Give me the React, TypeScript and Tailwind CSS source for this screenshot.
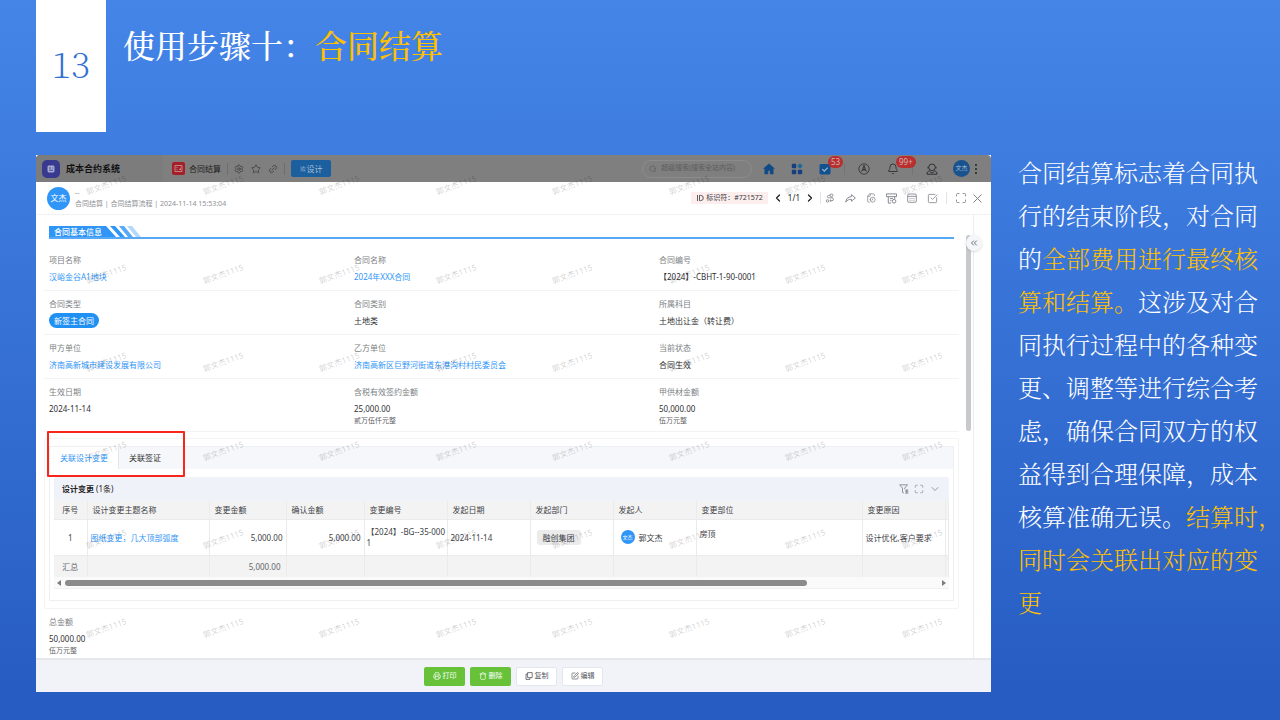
import React, { useState } from "react";
import clsx from "clsx";
import {
  Bell,
  ChevronDown,
  ChevronLeft,
  ChevronRight,
  ChevronsLeft,
  FileClock,
  Link2,
  Maximize,
  Printer,
  Search,
  Settings,
  SlidersHorizontal,
  SquareCheckBig,
  SquarePen,
  Star,
  Trash,
  X,
} from "lucide-react";

type Field = {
  label: string;
  value: string;
  kind?: "text" | "link" | "tag";
  note?: string;
};

const rows: Field[][] = [
  [
    { label: "项目名称", value: "汉峪金谷A1地块", kind: "link" },
    { label: "合同名称", value: "2024年XXX合同", kind: "link" },
    { label: "合同编号", value: "【2024】-CBHT-1-90-0001" },
  ],
  [
    { label: "合同类型", value: "新签主合同", kind: "tag" },
    { label: "合同类别", value: "土地类" },
    { label: "所属科目", value: "土地出让金（转让费）" },
  ],
  [
    { label: "甲方单位", value: "济南高新城市建设发展有限公司", kind: "link" },
    {
      label: "乙方单位",
      value: "济南高新区巨野河街道东港沟村村民委员会",
      kind: "link",
    },
    { label: "当前状态", value: "合同生效" },
  ],
  [
    { label: "生效日期", value: "2024-11-14" },
    { label: "含税有效签约金额", value: "25,000.00", note: "贰万伍仟元整" },
    { label: "甲供材金额", value: "50,000.00", note: "伍万元整" },
  ],
];

const columns = [
  { title: "序号", width: "w-[33px]" },
  { title: "设计变更主题名称", width: "w-[122px]" },
  { title: "变更金额", width: "w-[77px]" },
  { title: "确认金额", width: "w-[78px]" },
  { title: "变更编号", width: "w-[83px]" },
  { title: "发起日期", width: "w-[83px]" },
  { title: "发起部门", width: "w-[83px]" },
  { title: "发起人", width: "w-[83px]" },
  { title: "变更部位", width: "w-[166px]" },
  { title: "变更原因", width: "w-[83px]" },
];

const FieldItem: React.FC<{ field: Field }> = ({ field }) => (
  <div className="pl-[5px] pt-[5px]">
    <div className="text-[8px] leading-4 text-[#7d7f84]">{field.label}</div>
    {field.kind === "link" && (
      <a
        href="#"
        className="mt-[2px] block text-[8px] leading-[14px] text-[#2f95f7]"
      >
        {field.value}
      </a>
    )}
    {field.kind === "tag" && (
      <div className="mt-px w-fit rounded-full bg-[#2090f3] px-[5px] text-[8px] leading-[15px] text-white">
        {field.value}
      </div>
    )}
    {!field.kind && (
      <div className="mt-[2px] text-[8px] leading-[14px] text-[#303133]">
        {field.value}
      </div>
    )}
    {field.note && (
      <div className="text-[7px] leading-[9px] text-[#606266]">
        {field.note}
      </div>
    )}
  </div>
);

const Badge: React.FC<{ children: React.ReactNode }> = ({ children }) => (
  <span className="absolute -top-[7px] left-[9px] rounded-full bg-[#b92e2e] px-[3px] text-[8px] leading-[12px] text-[#d0b4b4]">
    {children}
  </span>
);

const TopBar: React.FC = () => (
  <header className="flex h-[27px] items-center rounded-t-[4px] bg-[#7f7f7f] pr-3 text-[#3b3d41]">
    <div className="flex h-full w-[127px] items-center gap-[6px] rounded-tl-[4px] bg-[#7c7c7d] pl-[6px]">
      <svg viewBox="0 0 18 18" className="size-[18px]">
        <rect width="18" height="18" rx="5" fill="#373a8e" />
        <rect x="5.5" y="5.5" width="7" height="7" rx="1.4" fill="#a7aad0" />
        <path
          d="M7 8h2M7 10.2h4M10.5 8h.8"
          stroke="#373a8e"
          strokeWidth=".9"
        />
      </svg>
      <span className="text-[9px] font-bold text-[#111]">成本合约系统</span>
    </div>
    <div className="ml-[9px] flex items-center gap-1">
      <svg viewBox="0 0 13 13" className="size-[13px]">
        <rect width="13" height="13" rx="2" fill="#a61f28" />
        <path
          d="M3 3.5h7v6H3zM4.5 5.5h1M4.5 7.5h1M7 7l1.2 1L9 5.5"
          fill="none"
          stroke="#c5a0a2"
          strokeWidth=".8"
        />
      </svg>
      <span className="text-[8px] text-[#1d1e20]">合同结算</span>
    </div>
    <span className="mx-[6px] h-3 w-px bg-[#6d6d6d]" />
    <div className="flex items-center gap-[7px]">
      <button aria-label="设置">
        <Settings size={10} strokeWidth={1.8} />
      </button>
      <button aria-label="收藏">
        <Star size={10} strokeWidth={1.8} />
      </button>
      <button aria-label="链接">
        <Link2 size={10} strokeWidth={1.8} className="-rotate-45" />
      </button>
    </div>
    <span className="mx-[6px] h-3 w-px bg-[#6d6d6d]" />
    <button className="flex h-[17px] w-10 items-center justify-center gap-px rounded-[2px] bg-[#1b5f9f] text-[8px] text-[#a9bfd4]">
      <SlidersHorizontal size={6} />
      设计
    </button>

    <label className="ml-auto flex h-[18px] w-[110px] items-center gap-1 rounded-full border border-[#8c8c8c] px-[6px]">
      <Search size={8} className="shrink-0 text-[#5c5c5c]" />
      <input
        type="text"
        aria-label="搜索"
        placeholder="超级搜索(搜索全站内容)"
        className="w-full min-w-0 bg-transparent text-[7px] outline-none placeholder:text-[#5d5d5d]"
      />
    </label>
    <div className="ml-[11px] flex items-center gap-4">
      <svg viewBox="0 0 12 12" className="size-3">
        <path
          d="M6 .8.6 5.6h1.2V11h3V7.6h2.4V11h3V5.6h1.2z"
          fill="#0f4a86"
          stroke="#0f4a86"
          strokeWidth=".5"
          strokeLinejoin="round"
        />
      </svg>
      <svg viewBox="0 0 12 12" className="size-3">
        <rect x=".8" y=".8" width="4.4" height="4.4" rx=".8" fill="#173f80" />
        <rect x=".8" y="6.8" width="4.4" height="4.4" rx=".8" fill="#173f80" />
        <rect x="6.8" y="6.8" width="4.4" height="4.4" rx=".8" fill="#173f80" />
        <path d="M9 .3 11.7 3 9 5.7 6.3 3z" fill="#17699c" />
      </svg>
      <span className="relative">
        <svg viewBox="0 0 12 12" className="size-3">
          <rect x=".5" y="1" width="11" height="10.5" rx="1.5" fill="#125190" />
          <path
            d="m3.3 6.2 2 2 3.4-3.6"
            fill="none"
            stroke="#a5b8cc"
            strokeWidth="1.2"
          />
        </svg>
        <Badge>53</Badge>
      </span>
    </div>
    <span className="mx-[13px] h-3 w-px bg-[#747474]" />
    <div className="flex items-center gap-[17px]">
      <svg
        viewBox="0 0 12 12"
        className="size-3"
        fill="none"
        stroke="#2f3134"
        strokeWidth=".8"
      >
        <circle cx="6" cy="6" r="5.2" />
        <path d="M6 2.2v4.4L2.6 8.6M6 6.6l3.4 2M6 2.4 4.4 6.8 6 6.6l1.6.2z" />
      </svg>
      <span className="relative">
        <Bell size={12} strokeWidth={1.8} className="text-[#2f3134]" />
        <Badge>99+</Badge>
      </span>
    </div>
    <span className="mx-[13px] h-3 w-px bg-[#747474]" />
    <svg
      viewBox="0 0 12 12"
      className="size-3"
      fill="none"
      stroke="#2f3134"
      strokeWidth="1"
    >
      <circle cx="6" cy="4.3" r="3.3" />
      <path d="M2 3.6v2M10 3.6v2M3.6 7.4 1 9.6v1.6h10V9.6L8.4 7.4M3.6 8.4 6 10l2.4-1.6" />
    </svg>
    <span className="ml-[15px] flex size-[17px] items-center justify-center rounded-full bg-[#19538f] text-[6px] text-[#a6bbd0]">
      文杰
    </span>
    <svg viewBox="0 0 6 12" className="ml-[3px] h-3 w-[6px]" fill="#222">
      <circle cx="3" cy="2" r="1" />
      <circle cx="3" cy="6" r="1" />
      <circle cx="3" cy="10" r="1" />
    </svg>
  </header>
);

const DrawerHeader: React.FC = () => (
  <div className="flex h-[33px] items-center border-b border-[#f1f1f2] pr-[6px] pl-[11px]">
    <span className="flex size-[23px] items-center justify-center rounded-full bg-[#2f95f7] text-[8px] text-white">
      文杰
    </span>
    <div className="ml-[5px] text-[7px] leading-[11px] text-[#8d8f94]">
      <div>--</div>
      <div>合同结算 | 合同结算流程 | 2024-11-14 15:53:04</div>
    </div>
    <div className="ml-auto flex items-center text-[#7d8087]">
      <span className="flex h-[12px] items-center gap-[2px] bg-[#fdeeee] px-[5px] text-[7px] leading-[12px] text-[#35373b]">
        <svg
          viewBox="0 0 8 8"
          className="size-2"
          fill="none"
          stroke="currentColor"
          strokeWidth=".8"
        >
          <path d="M1.5 1v6M3.5 1.4h1.2a2.6 2.6 0 0 1 0 5.2H3.5z" />
        </svg>
        标识符：#721572
      </span>
      <button aria-label="上一条" className="ml-1 text-[#222]">
        <ChevronLeft size={12} strokeWidth={2.6} />
      </button>
      <span className="mx-1 text-[8px] text-[#222]">1/1</span>
      <button aria-label="下一条" className="text-[#222]">
        <ChevronRight size={12} strokeWidth={2.6} />
      </button>
      <span className="mx-1 h-3 w-px bg-[#e3e4e7]" />
      <div className="flex items-center gap-[10px]">
        <button aria-label="流程">
          <svg
            viewBox="0 0 12 12"
            className="size-[10px]"
            fill="none"
            stroke="currentColor"
            strokeWidth="1"
          >
            <circle cx="7.8" cy="2.8" r="1.7" />
            <circle cx="3" cy="9.5" r="1.5" />
            <path d="M6.1 2.8H4.4a1.5 1.5 0 0 0 0 3h4a1.6 1.6 0 0 1 0 3.4H6M7.2 7.8 5.8 9.2l1.4 1.4" />
          </svg>
        </button>
        <button aria-label="转发">
          <svg
            viewBox="0 0 12 12"
            className="size-[11px]"
            fill="none"
            stroke="currentColor"
            strokeWidth="1"
            strokeLinejoin="round"
          >
            <path d="M7 1.8 11.3 5.4 7 9V6.9C4.4 6.8 2.4 7.6.8 10 1.2 6.6 3 4.2 7 3.9z" />
          </svg>
        </button>
        <button aria-label="日志">
          <FileClock size={10} strokeWidth={1.7} className="-scale-x-100" />
        </button>
        <button aria-label="打印模板">
          <svg
            viewBox="0 0 12 12"
            className="size-[11px]"
            fill="none"
            stroke="currentColor"
            strokeWidth="1"
          >
            <path d="M.5 1h11v3H.5zM2.5 4v7h3M9.5 4v2.5M4.5 6h3M4.5 8h1.5" />
            <circle cx="8.8" cy="9" r="2" />
          </svg>
        </button>
        <button aria-label="日程">
          <svg
            viewBox="0 0 12 12"
            className="size-[10px]"
            fill="none"
            stroke="currentColor"
            strokeWidth="1"
          >
            <rect x=".8" y="1.2" width="10.4" height="10" rx="1.6" />
            <path d="M.8 4h10.4" />
            <path
              d="M3 6.6h6.5M3 8.8h6.5"
              strokeDasharray="1.2 1.2"
              strokeWidth=".9"
            />
          </svg>
        </button>
        <button aria-label="任务">
          <SquareCheckBig size={11} strokeWidth={1.7} />
        </button>
      </div>
      <span className="mx-2 h-3 w-px bg-[#e3e4e7]" />
      <button aria-label="全屏">
        <Maximize size={12} strokeWidth={1.7} />
      </button>
      <button aria-label="关闭" className="ml-[3px]">
        <X size={15} strokeWidth={1.6} />
      </button>
    </div>
  </div>
);

const SectionTitle: React.FC = () => (
  <div className="mx-[5px] flex h-[13px] border-b-2 border-[#57a9f8]">
    <h2 className="h-[11px] bg-[#2f95f7] pr-1 pl-[5px] text-[8px] leading-[11px] font-medium text-white">
      合同基本信息
    </h2>
    <svg viewBox="0 0 36 11" className="h-[11px] w-9">
      <path d="M0 0 10 11H0z" fill="#2f95f7" />
      <path d="M4 0h5l10 11h-5z" fill="#2f95f7" />
      <path d="M13 0h5l9 11h-5z" fill="#57a9f8" />
      <path d="M21 0h5l9 11h-5z" fill="#b4d8fc" />
    </svg>
  </div>
);

const ChangeTable: React.FC = () => (
  <div className="border-b border-[#f0f0f0]">
    <div className="flex h-6 items-center rounded-t-[2px] bg-[#eff3f9] px-2">
      <h3 className="text-[8px] text-[#1f2124]">
        <b>设计变更</b> (1条)
      </h3>
      <div className="ml-auto flex items-center gap-[5px] text-[#7d8087]">
        <button aria-label="筛选">
          <svg
            viewBox="0 0 12 12"
            className="size-[10px]"
            fill="none"
            stroke="currentColor"
            strokeWidth="1"
          >
            <path d="M.8 1h9.4L6.8 5v1.2M.8 1l3.4 4v5l1.8 1M7.5 7.4h3.6M7.5 9.2h3.6M7.5 11h3.6M9.3 6.5V11" />
          </svg>
        </button>
        <button aria-label="展开">
          <Maximize size={10} strokeWidth={1.5} />
        </button>
        <button aria-label="收起">
          <ChevronDown size={12} strokeWidth={1.6} />
        </button>
      </div>
    </div>
    <table className="w-full table-fixed text-left text-[8px] leading-[11px] text-[#404246] [&_td]:border-r [&_td]:border-[#ebebeb] [&_th]:border-r [&_th]:border-[#ebebeb]">
      <thead>
        <tr className="h-[18px] bg-[#f3f3f3]">
          {columns.map((col, i) => (
            <th
              key={col.title}
              className={clsx(
                "font-normal whitespace-nowrap",
                col.width,
                i === 0 ? "text-center" : "pl-[5px]",
              )}
            >
              {col.title}
            </th>
          ))}
          <th aria-hidden="true" />
        </tr>
      </thead>
      <tbody>
        <tr className="h-9 border-y border-[#ebebeb]">
          <td className="text-center">1</td>
          <td className="pl-[3px]">
            <a href="#" className="text-[#2f95f7]">
              图纸变更，几大顶部弧度
            </a>
          </td>
          <td className="pr-[3px] text-right">5,000.00</td>
          <td className="pr-[3px] text-right">5,000.00</td>
          <td className="pl-[2px] break-all">【2024】-BG--35-0001</td>
          <td className="pl-[3px]">2024-11-14</td>
          <td className="pl-[6px]">
            <span className="inline-block rounded-[3px] bg-[#ebebec] px-[6px] py-[2px]">
              融创集团
            </span>
          </td>
          <td className="pl-[7px]">
            <div className="flex items-center gap-1">
              <span className="flex size-[14px] items-center justify-center rounded-full bg-[#2f95f7] text-[5px] text-white">
                文杰
              </span>
              郭文杰
            </div>
          </td>
          <td className="pt-2 pl-[3px] align-top">房顶</td>
          <td className="pl-[3px] whitespace-nowrap">设计优化,客户要求</td>
          <td />
        </tr>
        <tr className="h-[22px] bg-[#f3f3f3] text-[#66686c]">
          <td className="text-center">汇总</td>
          <td />
          <td className="pr-[5px] text-right">5,000.00</td>
          <td />
          <td />
          <td />
          <td />
          <td />
          <td />
          <td />
          <td />
        </tr>
      </tbody>
    </table>
    <div className="flex h-[11px] items-center gap-1 bg-[#fafafa] px-[3px]">
      <svg viewBox="0 0 4 6" className="h-[6px] w-1" fill="#7c7c7c">
        <path d="M4 0v6L0 3z" />
      </svg>
      <div className="flex-1">
        <div className="h-[6px] w-[85%] rounded-full bg-[#8b8b8b]" />
      </div>
      <svg viewBox="0 0 4 6" className="h-[6px] w-1" fill="#7c7c7c">
        <path d="M0 0v6l4-3z" />
      </svg>
    </div>
  </div>
);

const RelatedCard: React.FC = () => {
  const [tab, setTab] = useState("design");

  const tabs = [
    { id: "design", name: "关联设计变更" },
    { id: "visa", name: "关联签证" },
  ];

  return (
    <section className="relative mt-[6px] rounded-[2px] border border-[#f4f4f5] px-1 py-[7px]">
      <div className="border border-[#eeeff2]">
        <div role="tablist" className="flex h-[22px] bg-[#f5f7fa]">
          {tabs.map((item) => (
            <button
              key={item.id}
              role="tab"
              aria-selected={tab === item.id}
              onClick={() => setTab(item.id)}
              className={clsx(
                "px-[10px] text-[8px]",
                tab === item.id
                  ? "border-r border-[#e4e7ed] bg-white text-[#2f95f7]"
                  : "text-[#303133]",
              )}
            >
              {item.name}
            </button>
          ))}
        </div>
        <div className="px-1 pt-2 pb-[11px]">
          <ChangeTable />
        </div>
      </div>
      {/* red callout around the tabs */}
      <div className="pointer-events-none absolute -top-[8px] left-[2px] h-[46px] w-[138px] rounded-[1px] border-2 border-[#f9261c]" />
    </section>
  );
};

const Watermark: React.FC = () => (
  <div
    aria-hidden="true"
    className="pointer-events-none absolute -top-[14px] right-[11px] bottom-5 left-3 grid grid-cols-8 grid-rows-6 place-items-center text-[8px] text-black/20 select-none"
  >
    {Array.from({ length: 48 }, (_, i) => (
      <span key={i} className="-rotate-20 whitespace-nowrap">
        郭文杰1115
      </span>
    ))}
  </div>
);

const ContractPanel: React.FC = () => (
  <div className="relative min-w-0 flex-1 bg-white font-['Noto_Sans','Noto_Sans_CJK_SC',sans-serif]">
    <TopBar />
    <DrawerHeader />
    <div className="flex">
      <main className="min-w-0 flex-1 pt-[11px] pr-[7px] pb-[3px] pl-2">
        <SectionTitle />
        <div className="mt-2">
          {rows.map((row, i) => (
            <div
              key={i}
              className="grid min-h-11 grid-cols-3 border-b border-[#f3f3f4] pb-[6px]"
            >
              {row.map((field) => (
                <FieldItem key={field.label} field={field} />
              ))}
            </div>
          ))}
        </div>
        <RelatedCard />
        <FieldItem
          field={{ label: "总金额", value: "50,000.00", note: "伍万元整" }}
        />
      </main>
      <div className="w-[7px] pt-5">
        <div className="h-[196px] w-[5px] rounded-full bg-[#c8c9cb]" />
      </div>
      <div className="relative w-[18px] border-l border-[#ebecef]">
        <button
          aria-label="展开侧栏"
          className="absolute top-5 -left-2 flex size-4 items-center justify-center rounded-full bg-[#f5f6fa] text-[#55575c] shadow"
        >
          <ChevronsLeft size={10} strokeWidth={2} />
        </button>
      </div>
    </div>
    <footer className="flex h-[34px] items-center justify-center gap-[5px] border-t-2 border-[#e6e7ea] bg-[#f1f3f8] text-[7px]">
      <button className="flex h-[19px] w-[41px] items-center justify-center gap-[2px] rounded-[2px] bg-[#67c23a] text-white">
        <Printer size={8} />
        打印
      </button>
      <button className="flex h-[19px] w-[41px] items-center justify-center gap-[2px] rounded-[2px] bg-[#67c23a] text-white">
        <Trash size={8} />
        删除
      </button>
      <button className="flex h-[19px] w-[41px] items-center justify-center gap-[2px] rounded-[2px] border border-[#e3e6ee] bg-white text-[#55575c]">
        <svg
          viewBox="0 0 8 8"
          className="size-2"
          fill="none"
          stroke="currentColor"
          strokeWidth=".8"
        >
          <path d="M2.6.6h4.6v5H2.6zM2.6 2H1v5.4h4V5.8" />
        </svg>
        复制
      </button>
      <button className="flex h-[19px] w-[41px] items-center justify-center gap-[2px] rounded-[2px] border border-[#e3e6ee] bg-white text-[#55575c]">
        <SquarePen size={8} />
        编辑
      </button>
    </footer>
    <Watermark />
  </div>
);

export default function App() {
  return (
    <div className="min-h-screen bg-linear-to-b from-[#4585e8] to-[#265bc1] pb-7 font-['Noto_Serif_CJK_SC','Noto_Sans_CJK_SC',serif] text-white">
      <div className="flex items-start pl-9">
        <div className="flex h-[132px] w-[70px] items-center justify-center bg-white pb-[6px] text-4xl font-extralight text-[#3470d4]">
          13
        </div>
        <h1 className="ml-[17px] pt-5 text-[32px] leading-[48px] font-medium">
          使用步骤十：<span className="text-[#ffc000]">合同结算</span>
        </h1>
      </div>
      <div className="mt-[23px] flex items-start pr-[22px] pl-9">
        <ContractPanel />
        <p className="-mt-[5px] ml-[27px] w-60 shrink-0 text-2xl leading-[43px] font-light whitespace-nowrap">
          合同结算标志着合同执
          <br />
          行的结束阶段，对合同
          <br />
          的<span className="text-[#ffc000]">全部费用进行最终核</span>
          <br />
          <span className="text-[#ffc000]">算和结算。</span>这涉及对合
          <br />
          同执行过程中的各种变
          <br />
          更、调整等进行综合考
          <br />
          虑，确保合同双方的权
          <br />
          益得到合理保障，成本
          <br />
          核算准确无误。
          <span className="text-[#ffc000]">
            结算时，
            <br />
            同时会关联出对应的变
            <br />更
          </span>
        </p>
      </div>
    </div>
  );
}
